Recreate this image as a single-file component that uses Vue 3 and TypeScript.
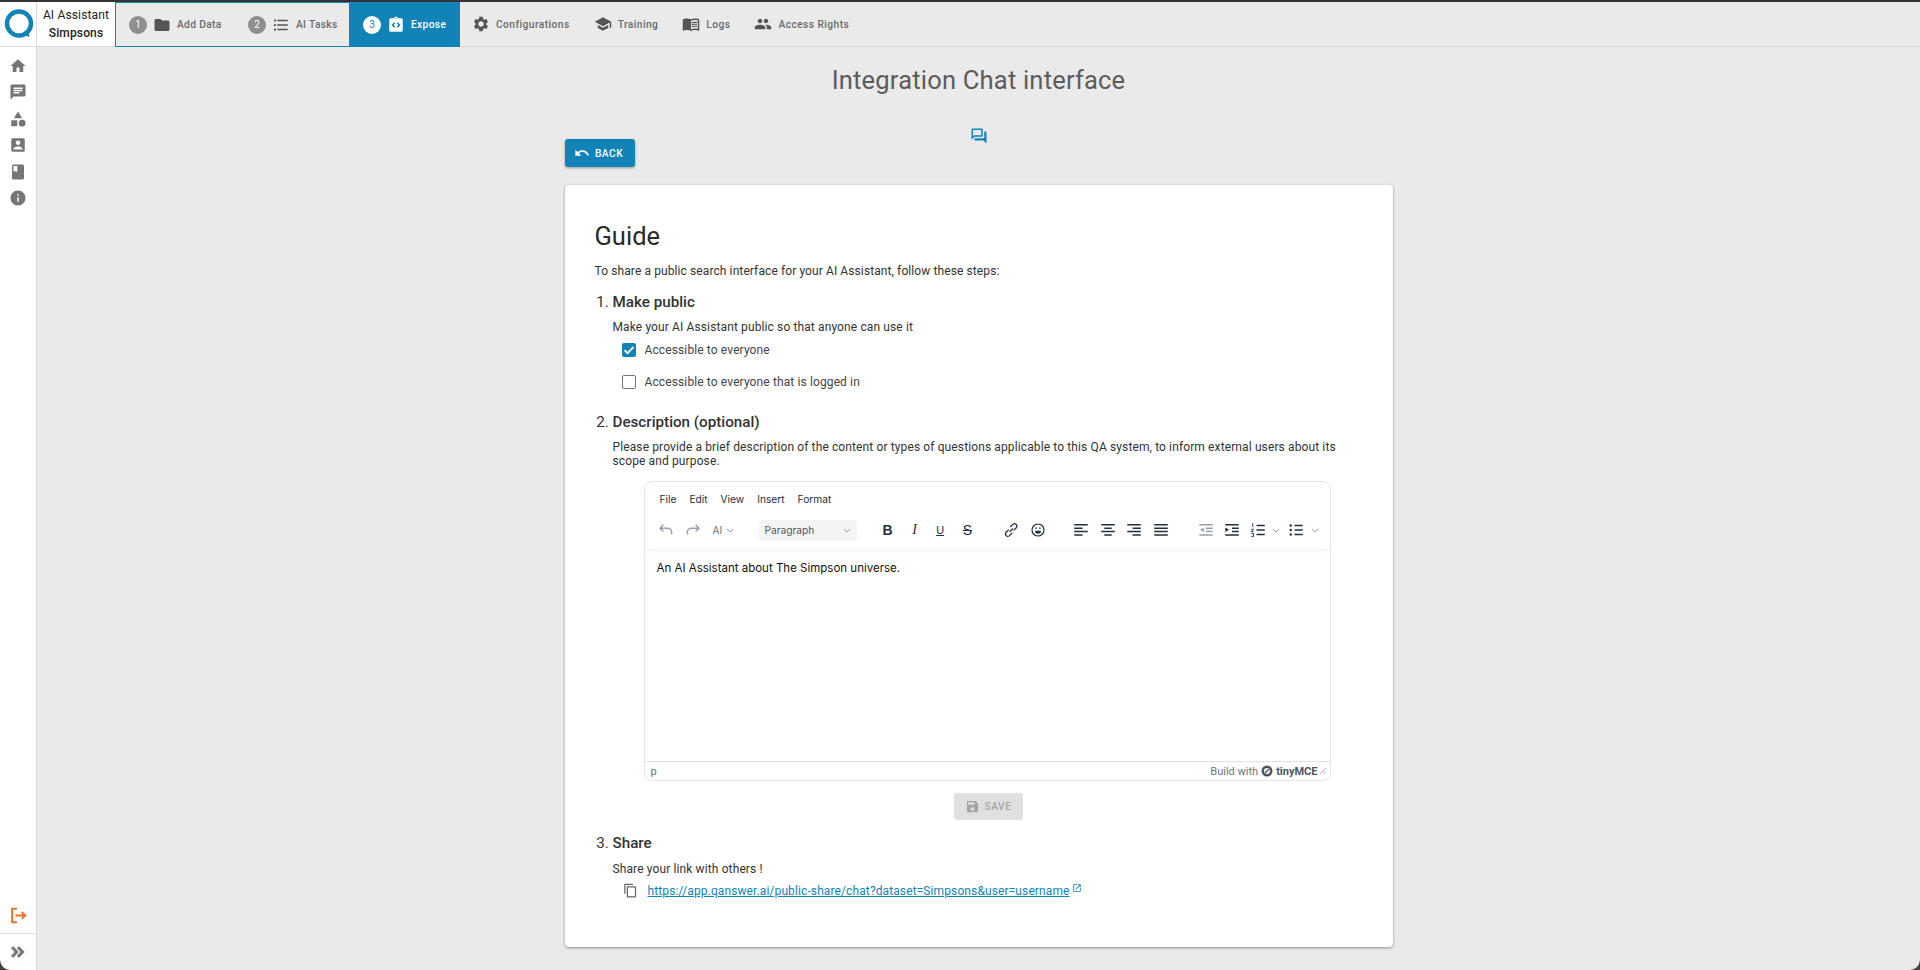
<template>
  <div class="window">
    <aside class="sidebar">
      <div class="logo-box">
        <svg class="logo" viewBox="0 0 30 30" width="30" height="30">
          <circle cx="15" cy="14.5" r="12" fill="none" stroke="#1283b7" stroke-width="4.5" />
          <path d="M17 25l8.5 3-1.5-8z" fill="#1283b7" />
        </svg>
      </div>
      <nav class="side-nav">
        <svg v-for="icon in sideIcons" :key="icon" class="side-icon" viewBox="0 0 24 24"><path :d="icon" /></svg>
      </nav>
      <div class="side-logout">
        <svg viewBox="0 0 24 24" width="19" height="19" fill="none" stroke="#e8742a" stroke-width="2.6">
          <path d="M10 3.5H4v17h6" />
          <path d="M8 12h12M16 8l4.5 4-4.5 4" />
        </svg>
      </div>
      <div class="side-expand">
        <svg viewBox="0 0 24 24" width="20" height="20" fill="#757575">
          <path d="M6.4 5 3.5 7.2 8 12l-4.500 4.800L6.400 19l6.500-7zM13.400 5l-2.900 2.200L15 12l-4.500 4.800 2.900 2.200 6.500-7z" />
        </svg>
      </div>
    </aside>

    <div class="main">
      <header class="topbar">
        <div class="assistant">
          <span>AI Assistant</span>
          <strong>Simpsons</strong>
        </div>
        <div class="steps">
          <div v-for="step in steps" :key="step.label" class="step" :class="{ active: step.active }" :style="{ width: step.width + 'px' }">
            <span class="badge">{{ step.n }}</span>
            <svg class="tab-icon" viewBox="0 0 24 24"><path :d="step.icon" /></svg>
            <span class="tab-label">{{ step.label }}</span>
          </div>
        </div>
        <div v-for="tab in tabs" :key="tab.label" class="tab">
          <svg class="tab-icon" viewBox="0 0 24 24"><path :d="tab.icon" /></svg>
          <span class="tab-label">{{ tab.label }}</span>
        </div>
      </header>

      <main class="content">
        <h1 class="page-title">Integration Chat interface</h1>
        <svg class="chat-mark" viewBox="0 0 24 24"><path d="M15 4v7H5.170L4 12.170V4h11m1-2H3c-.55 0-1 .45-1 1v14l4-4h10c.55 0 1-.45 1-1V3c0-.55-.45-1-1-1zm5 4h-2v9H6v2c0 .55.45 1 1 1h11l4 4V7c0-.55-.45-1-1-1z" /></svg>

        <div class="column">
          <button class="back-btn">
            <svg viewBox="0 0 24 24" width="16" height="16" fill="#fff"><path d="M12.500 8c-2.650 0-5.050.99-6.900 2.600L2 7v9h9l-3.620-3.620c1.390-1.160 3.160-1.880 5.120-1.880 3.540 0 6.550 2.310 7.600 5.500l2.370-.78C21.080 11.030 17.150 8 12.500 8z" /></svg>
            Back
          </button>

          <section class="card">
            <h2 class="guide">Guide</h2>
            <p class="intro">To share a public search interface for your AI Assistant, follow these steps:</p>

            <ol class="guide-steps">
              <li>
                <h3>Make public</h3>
                <p class="step-text">Make your AI Assistant public so that anyone can use it</p>
                <label class="check first">
                  <span class="box checked">
                    <svg viewBox="0 0 14 14" width="14" height="14" fill="none" stroke="#fff" stroke-width="1.8"><path d="M2.500 7.200l3 3 6-6.200" /></svg>
                  </span>
                  Accessible to everyone
                </label>
                <label class="check">
                  <span class="box"></span>
                  Accessible to everyone that is logged in
                </label>
              </li>

              <li class="second">
                <h3>Description (optional)</h3>
                <p class="step-text">Please provide a brief description of the content or types of questions applicable to this QA system, to inform external users about its scope and purpose.</p>

                <div class="editor">
                  <div class="editor-head">
                    <div class="menubar">
                      <span v-for="item in menuItems" :key="item">{{ item }}</span>
                    </div>
                    <div class="toolbar">
                      <svg class="tool dim undo" viewBox="0 0 24 24"><path d="M8.500 5 4 9.500 8.500 14M4.500 9.500H14a5.500 5.500 0 0 1 5.500 5.500v3" /></svg>
                      <svg class="tool dim redo" viewBox="0 0 24 24"><path d="M15.500 5 20 9.500 15.500 14M19.500 9.500H10A5.500 5.500 0 0 0 4.500 15v3" /></svg>
                      <span class="ai-menu">AI<svg class="chev" viewBox="0 0 10 6"><path d="M1 1l4 4 4-4" /></svg></span>
                      <span class="format-select">Paragraph<svg class="chev" viewBox="0 0 10 6"><path d="M1 1l4 4 4-4" /></svg></span>
                      <span class="tb-b">B</span>
                      <span class="tb-i">I</span>
                      <span class="tb-u">U</span>
                      <span class="tb-s">S</span>
                      <svg class="tool link" viewBox="0 0 24 24"><path d="M10 14.500l4.500-4.500M9 11.500 5.500 15a3.500 3.500 0 0 0 0 4.500 3.500 3.500 0 0 0 4.500 0L13.500 16M11 8l3.500-3.500a3.500 3.500 0 0 1 4.500 0 3.500 3.500 0 0 1 0 4.500L15.500 12.500" /></svg>
                      <svg class="tool smile" viewBox="0 0 24 24"><circle cx="12" cy="12" r="8" /><path d="M8 13h8a4 4 0 0 1-8 0z" fill="#222f3e" stroke="none" /><circle cx="9.500" cy="9.500" r="1.100" fill="#222f3e" stroke="none" /><circle cx="14.500" cy="9.500" r="1.100" fill="#222f3e" stroke="none" /></svg>
                      <svg v-for="(lines, i) in alignIcons" :key="i" class="tool align" :class="{ 'align-first': i === 0 }" viewBox="0 0 24 24"><path :d="lines" /></svg>
                      <svg class="tool outdent dim" viewBox="0 0 24 24"><path d="M3 5h18M12 9.500h9M12 14h9M3 18.500h18" /><path d="M9 8.500v6L4 11.500z" fill="#9aa1a9" stroke="none" /></svg>
                      <svg class="tool indent" viewBox="0 0 24 24"><path d="M3 5h18M12 9.500h9M12 14h9M3 18.500h18" /><path d="M3 8.500v6l5-3z" fill="#222f3e" stroke="none" /></svg>
                      <svg class="tool list" viewBox="0 0 24 24"><path d="M10 6h11M10 12h11M10 18h11" /><path class="thin" d="M5 3v5M3 11h3l-3 3h3M3 16.500h3v4H3" /></svg>
                      <svg class="chev list-chev" viewBox="0 0 10 6"><path d="M1 1l4 4 4-4" /></svg>
                      <svg class="tool bullets" viewBox="0 0 24 24"><path d="M10 6h11M10 12h11M10 18h11" /><circle cx="5" cy="6" r="1.600" fill="#222f3e" stroke="none" /><circle cx="5" cy="12" r="1.600" fill="#222f3e" stroke="none" /><circle cx="5" cy="18" r="1.600" fill="#222f3e" stroke="none" /></svg>
                      <svg class="chev list-chev-2" viewBox="0 0 10 6"><path d="M1 1l4 4 4-4" /></svg>
                    </div>
                  </div>
                  <div class="editor-body">An AI Assistant about The Simpson universe.</div>
                  <div class="statusbar">
                    <span class="path">p</span>
                    <span class="brand">
                      Build with
                      <svg viewBox="0 0 24 24" width="12" height="12"><circle cx="12" cy="12" r="8.500" fill="none" stroke="#4a5560" stroke-width="5" /><path d="M8 16 16 8" stroke="#4a5560" stroke-width="3" /></svg>
                      <b>tinyMCE</b>
                    </span>
                    <svg class="grip" viewBox="0 0 8 8" width="8" height="8" fill="none" stroke="#9aa0a6" stroke-width="0.8"><path d="M1 7l6-6M4.500 7L7 4.500" /></svg>
                  </div>
                </div>

                <div class="save-row">
                  <button class="save-btn">
                    <svg viewBox="0 0 24 24" width="15" height="15" fill="#a6a6a6"><path d="M17 3H5c-1.110 0-2 .9-2 2v14c0 1.100.89 2 2 2h14c1.100 0 2-.9 2-2V7l-4-4zm-5 16c-1.660 0-3-1.340-3-3s1.340-3 3-3 3 1.340 3 3-1.340 3-3 3zm3-10H5V5h10v4z" /></svg>
                    Save
                  </button>
                </div>
              </li>

              <li class="third">
                <h3>Share</h3>
                <p class="step-text">Share your link with others !</p>
                <div class="share-row">
                  <svg class="copy" viewBox="0 0 24 24"><path d="M16 1H4c-1.100 0-2 .9-2 2v14h2V3h12V1zm3 4H8c-1.100 0-2 .9-2 2v14c0 1.100.9 2 2 2h11c1.100 0 2-.9 2-2V7c0-1.100-.9-2-2-2zm0 16H8V7h11v14z" /></svg>
                  <a class="share-link">https://app.qanswer.ai/public-share/chat?dataset=Simpsons&amp;user=username</a>
                  <svg class="ext" viewBox="0 0 24 24"><path d="M19 19H5V5h7V3H5a2 2 0 0 0-2 2v14a2 2 0 0 0 2 2h14c1.100 0 2-.9 2-2v-7h-2v7zM14 3v2h3.590l-9.830 9.830 1.410 1.410L19 6.410V10h2V3h-7z" /></svg>
                </div>
              </li>
            </ol>
          </section>
        </div>
      </main>
    </div>

    <svg class="corner corner-left" viewBox="0 0 10 10" width="10" height="10"><path d="M0 0Q1 9 10 10H0z" fill="#4a4038" /></svg>
    <svg class="corner corner-right" viewBox="0 0 10 10" width="10" height="10"><path d="M10 0Q9 9 0 10H10z" fill="#4a4038" /></svg>
  </div>
</template>

<script setup lang="ts">
const sideIcons: string[] = [
  'M10 20v-6h4v6h5v-8h3L12 3 2 12h3v8z',
  'M20 2H4c-1.100 0-1.990.9-1.990 2L2 22l4-4h14c1.100 0 2-.9 2-2V4c0-1.100-.9-2-2-2zM6 9h12v2H6V9zm8 5H6v-2h8v2zm4-6H6V6h12v2z',
  'M12 2l-5.500 9h11zM17.500 13a4.500 4.500 0 1 0 0 9 4.500 4.500 0 0 0 0-9zM3 13.500h8v8H3z',
  'M3 5v14c0 1.100.89 2 2 2h14c1.100 0 2-.9 2-2V5c0-1.100-.9-2-2-2H5c-1.110 0-2 .9-2 2zm12 4c0 1.660-1.340 3-3 3s-3-1.340-3-3 1.340-3 3-3 3 1.340 3 3zm-9 8c0-2 4-3.100 6-3.100s6 1.100 6 3.100v1H6v-1z',
  'M18 2H6c-1.100 0-2 .9-2 2v16c0 1.100.9 2 2 2h12c1.100 0 2-.9 2-2V4c0-1.100-.9-2-2-2zM6 4h5v8l-2.500-1.500L6 12V4z',
  'M12 2C6.480 2 2 6.480 2 12s4.480 10 10 10 10-4.480 10-10S17.520 2 12 2zm1 15h-2v-6h2v6zm0-8h-2V7h2v2z',
]

const steps = [
  {
    n: 1,
    label: 'Add Data',
    width: 118,
    icon: 'M10 4H4c-1.100 0-1.990.9-1.990 2L2 18c0 1.100.9 2 2 2h16c1.100 0 2-.9 2-2V8c0-1.100-.9-2-2-2h-8l-2-2z',
  },
  {
    n: 2,
    label: 'AI Tasks',
    width: 115,
    icon: 'M4 10.500c-.83 0-1.500.67-1.500 1.500s.67 1.500 1.500 1.500 1.500-.67 1.500-1.500-.67-1.500-1.500-1.500zm0-6c-.83 0-1.500.67-1.500 1.500S3.170 7.500 4 7.500 5.500 6.830 5.500 6 4.830 4.500 4 4.500zm0 12c-.83 0-1.500.68-1.500 1.500s.68 1.500 1.500 1.500 1.500-.68 1.500-1.500-.67-1.500-1.500-1.500zM7 19h14v-2H7v2zm0-6h14v-2H7v2zm0-8v2h14V5H7z',
  },
  {
    n: 3,
    label: 'Expose',
    width: 111,
    active: true,
    icon: 'M19 3h-4.180C14.400 1.840 13.300 1 12 1c-1.300 0-2.400.84-2.820 2H5c-1.100 0-2 .9-2 2v14c0 1.100.9 2 2 2h14c1.100 0 2-.9 2-2V5c0-1.100-.9-2-2-2zm-8 11.170-1.410 1.420L6 12l3.590-3.590L11 9.830 8.830 12 11 14.170zm1-9.920c-.41 0-.75-.34-.75-.75s.34-.75.75-.75.75.34.75.75-.34.75-.75.75zm2.410 11.340L13 14.170 15.170 12 13 9.830l1.410-1.420L18 12l-3.590 3.590z',
  },
]

const tabs = [
  {
    label: 'Configurations',
    icon: 'M19.140 12.940c.04-.3.06-.61.06-.94 0-.32-.02-.64-.07-.94l2.030-1.580c.18-.14.23-.41.12-.61l-1.920-3.320c-.12-.22-.37-.29-.59-.22l-2.390.96c-.5-.38-1.030-.7-1.620-.94l-.36-2.540c-.04-.24-.24-.41-.48-.41h-3.840c-.24 0-.43.17-.47.41l-.36 2.540c-.59.24-1.130.57-1.620.94l-2.390-.96c-.22-.08-.47 0-.59.22L2.740 8.870c-.12.21-.08.47.12.61l2.030 1.580c-.05.3-.09.63-.09.94s.02.64.07.94l-2.030 1.580c-.18.14-.23.41-.12.61l1.920 3.320c.12.22.37.29.59.22l2.390-.96c.5.38 1.030.7 1.620.94l.36 2.540c.05.24.24.41.48.41h3.840c.24 0 .44-.17.47-.41l.36-2.540c.59-.24 1.130-.56 1.620-.94l2.390.96c.22.08.47 0 .59-.22l1.920-3.320c.12-.22.07-.47-.12-.61l-2.010-1.580zM12 15.600c-1.980 0-3.600-1.620-3.600-3.600s1.620-3.600 3.600-3.600 3.600 1.620 3.600 3.600-1.620 3.600-3.600 3.600z',
  },
  {
    label: 'Training',
    icon: 'M5 13.180v4L12 21l7-3.820v-4L12 17l-7-3.820zM12 3L1 9l11 6 9-4.910V17h2V9L12 3z',
  },
  {
    label: 'Logs',
    icon: 'M21 5c-1.110-.35-2.330-.5-3.500-.5-1.950 0-4.050.4-5.500 1.500-1.450-1.100-3.550-1.500-5.500-1.500S2.450 4.900 1 6v14.650c0 .25.25.5.5.5.1 0 .15-.05.25-.05C3.100 20.450 5.050 20 6.500 20c1.950 0 4.050.4 5.500 1.500 1.350-.85 3.800-1.500 5.500-1.500 1.650 0 3.350.3 4.750 1.050.1.05.15.05.25.05.25 0 .5-.25.5-.5V6c-.6-.45-1.250-.75-2-1zm0 13.500c-1.100-.35-2.300-.5-3.500-.5-1.700 0-4.150.65-5.500 1.500V8c1.350-.85 3.800-1.500 5.500-1.500 1.200 0 2.400.15 3.500.5v11.500zM17.500 10.500c.88 0 1.730.09 2.500.26V9.240c-.79-.15-1.640-.24-2.500-.24-1.700 0-3.240.29-4.500.83v1.660c1.130-.64 2.700-.99 4.500-.99zM13 12.490v1.660c1.130-.64 2.700-.99 4.500-.99.88 0 1.730.09 2.500.26V11.900c-.79-.15-1.640-.24-2.500-.24-1.700 0-3.240.3-4.500.83zM17.500 14.330c-1.700 0-3.240.29-4.500.83v1.660c1.130-.64 2.700-.99 4.500-.99.88 0 1.730.09 2.500.26v-1.520c-.79-.16-1.640-.24-2.500-.24z',
  },
  {
    label: 'Access Rights',
    icon: 'M16 11c1.660 0 2.990-1.340 2.990-3S17.660 5 16 5c-1.660 0-3 1.340-3 3s1.340 3 3 3zm-8 0c1.660 0 2.990-1.340 2.990-3S9.660 5 8 5C6.340 5 5 6.340 5 8s1.340 3 3 3zm0 2c-2.330 0-7 1.170-7 3.500V19h14v-2.500c0-2.330-4.670-3.500-7-3.500zm8 0c-.29 0-.62.02-.97.05 1.160.84 1.970 1.970 1.970 3.450V19h6v-2.500c0-2.330-4.670-3.500-7-3.500z',
  },
]

const menuItems = ['File', 'Edit', 'View', 'Insert', 'Format']

const alignIcons = [
  'M3 5h18M3 9.500h11M3 14h18M3 18.500h11',
  'M3 5h18M7 9.500h10M3 14h18M7 18.500h10',
  'M3 5h18M10 9.500h11M3 14h18M10 18.500h11',
  'M3 5h18M3 9.500h18M3 14h18M3 18.500h18',
]
</script>

<style>
html,
body {
  margin: 0;
  background: #eaeaea;
}
</style>

<style scoped>
.window {
  position: relative;
  display: flex;
  height: 970px;
  overflow: hidden;
  border-top: 2px solid #333;
  box-sizing: border-box;
  font-family: Roboto, "Liberation Sans", sans-serif;
  color: #333;
  background: #eaeaea;
}

.sidebar {
  width: 37px;
  flex: none;
  display: flex;
  flex-direction: column;
  background: #fff;
  border-right: 1px solid #dcdcdc;
  box-sizing: border-box;
}

.corner {
  position: absolute;
  bottom: 0;
}

.corner-left {
  left: 0;
}

.corner-right {
  right: 0;
}

.logo-box {
  height: 44px;
  display: flex;
  align-items: center;
  justify-content: center;
  border-bottom: 1px solid #e2e2e2;
}

.logo {
  margin-left: 1px;
}

.side-nav {
  display: flex;
  flex-direction: column;
  align-items: center;
  gap: 8.4px;
  padding-top: 10px;
  flex: 1;
}

.side-icon {
  width: 18px;
  height: 18px;
  fill: #757575;
}

.side-logout {
  height: 35px;
  display: flex;
  align-items: center;
  justify-content: center;
}

.side-expand {
  height: 36px;
  border-top: 1px solid #dcdcdc;
  display: flex;
  align-items: center;
  justify-content: center;
}

.main {
  flex: 1;
  min-width: 0;
  display: flex;
  flex-direction: column;
}

.topbar {
  height: 45px;
  flex: none;
  display: flex;
  align-items: stretch;
  border-bottom: 1px solid #d8d8d8;
  box-sizing: border-box;
}

.assistant {
  width: 78px;
  flex: none;
  background: #fff;
  display: flex;
  flex-direction: column;
  align-items: center;
  justify-content: center;
  gap: 2px;
  font-size: 12px;
  line-height: 16px;
  letter-spacing: 0.15px;
  color: #222;
}

.assistant strong {
  font-weight: 500;
}

.steps {
  display: flex;
  border: 1px solid #1283b7;
  border-right: none;
  margin-bottom: -1px;
}

.step {
  display: flex;
  align-items: center;
  padding-left: 14px;
  box-sizing: border-box;
}

.step:first-child {
  padding-left: 13px;
}

.step.active {
  background: #1283b7;
  color: #fff;
}

.badge {
  width: 18px;
  height: 18px;
  border-radius: 50%;
  background: #8f8f8f;
  color: #fff;
  font-size: 10px;
  display: flex;
  align-items: center;
  justify-content: center;
  flex: none;
}

.step.active .badge {
  background: #fff;
  color: #1283b7;
}

.tab {
  display: flex;
  align-items: center;
  padding: 0 12px;
}

.tab-icon {
  width: 18px;
  height: 18px;
  fill: #555;
  flex: none;
}

.step .tab-icon {
  margin: 0 6px;
}

.tab .tab-icon {
  margin-right: 6px;
}

.step.active .tab-icon {
  fill: #fff;
}

.tab-label {
  font-size: 10.2px;
  font-weight: 500;
  letter-spacing: 0.35px;
  color: #6a6a6a;
  white-space: nowrap;
}

.tab .tab-label {
  letter-spacing: 0.45px;
}

.step.active .tab-label {
  color: #fff;
}

.content {
  flex: 1;
  min-height: 0;
  display: flex;
  flex-direction: column;
  align-items: center;
}

.page-title {
  margin: 17px 0 0;
  font-size: 25.5px;
  line-height: 32px;
  font-weight: 400;
  letter-spacing: 0.2px;
  color: #5c5c5c;
}

.chat-mark {
  width: 18px;
  height: 18px;
  fill: #1283b7;
  margin-top: 31px;
  flex: none;
}

.column {
  width: 828px;
  flex: none;
}

.back-btn {
  height: 28px;
  width: 70px;
  margin-top: -6px;
  display: flex;
  align-items: center;
  justify-content: center;
  gap: 5px;
  border: none;
  border-radius: 3px;
  background: #1283b7;
  color: #fff;
  font-family: inherit;
  font-size: 10.2px;
  font-weight: 500;
  letter-spacing: 0.5px;
  text-transform: uppercase;
  padding: 0 2px 0 0;
  box-shadow: 0 1px 3px rgba(0, 0, 0, 0.35);
}

.card {
  margin-top: 18px;
  height: 762px;
  box-sizing: border-box;
  background: #fff;
  border-radius: 4px;
  box-shadow: 0 1px 3px rgba(0, 0, 0, 0.4);
  padding: 35px 30px 0;
}

.guide {
  margin: 0;
  font-size: 25.5px;
  line-height: 32px;
  font-weight: 400;
  color: #2a2a2a;
}

.intro {
  margin: 10px 0 0;
  font-size: 12px;
  line-height: 18px;
  letter-spacing: 0.1px;
}

.guide-steps {
  margin: 12px 0 0;
  padding: 0 0 0 18px;
  font-size: 15.2px;
}

.guide-steps h3 {
  margin: 0;
  font-size: 15.2px;
  line-height: 20px;
  font-weight: 500;
}

.step-text {
  margin: 8px 0 0;
  font-size: 12px;
  line-height: 14px;
  letter-spacing: 0.12px;
}

.check {
  display: flex;
  align-items: center;
  gap: 9px;
  margin: 11px 0 0 9px;
  font-size: 12px;
  line-height: 20px;
  letter-spacing: 0.12px;
  color: #444;
}

.check.first {
  margin-top: 6px;
}

.check + .check {
  margin-top: 12px;
}

.box {
  width: 14px;
  height: 14px;
  box-sizing: border-box;
  border: 1.5px solid #757575;
  border-radius: 2px;
  display: flex;
  align-items: center;
  justify-content: center;
}

.box.checked {
  border: none;
  background: #1283b7;
}

.second {
  margin-top: 20px;
}

.editor {
  margin: 13px 0 0 31px;
  width: 687px;
  height: 300px;
  box-sizing: border-box;
  border: 1px solid #e6e6e6;
  border-radius: 8px;
  display: flex;
  flex-direction: column;
  overflow: hidden;
  font-family: Inter, "Liberation Sans", sans-serif;
}

.editor-head {
  height: 67px;
  flex: none;
  box-shadow: 0 2px 4px rgba(0, 0, 0, 0.06);
}

.menubar {
  display: flex;
  gap: 13px;
  padding: 10px 0 0 15px;
  font-size: 10.2px;
  line-height: 14px;
  color: #222f3e;
}

.toolbar {
  display: flex;
  align-items: center;
  height: 22px;
  margin-top: 13px;
  padding-left: 12px;
  color: #222f3e;
}

.tool {
  width: 18px;
  height: 18px;
  flex: none;
  fill: none;
  stroke: #222f3e;
  stroke-width: 2;
}

.tool.dim {
  stroke: #9aa1a9;
}

.tool.redo {
  margin-left: 9px;
}

.chev {
  width: 8px;
  height: 5px;
  fill: none;
  stroke: #8a929b;
  stroke-width: 1.2;
  flex: none;
}

.ai-menu {
  display: flex;
  align-items: center;
  gap: 4px;
  width: 30px;
  margin-left: 11px;
  font-size: 10.2px;
  color: #69727d;
}

.format-select {
  display: flex;
  align-items: center;
  justify-content: space-between;
  box-sizing: border-box;
  width: 98px;
  height: 21px;
  margin-left: 16px;
  padding: 0 6px 0 6px;
  background: #f4f4f4;
  border-radius: 3px;
  font-size: 10.2px;
  color: #4e5864;
}

.tb-b,
.tb-i,
.tb-u,
.tb-s {
  width: 12px;
  text-align: center;
  font-family: "Liberation Sans", sans-serif;
  font-size: 13px;
  flex: none;
}

.tb-b {
  margin-left: 25px;
  font-weight: 700;
  font-size: 14px;
}

.tb-i {
  margin-left: 15px;
  font-family: "Liberation Serif", serif;
  font-style: italic;
  font-size: 14px;
}

.tb-u {
  margin-left: 13.7px;
  font-size: 11px;
  text-decoration: underline;
}

.tb-s {
  margin-left: 15.3px;
  font-size: 14px;
  text-decoration: line-through;
}

.tool.link {
  margin-left: 29px;
  stroke-width: 1.7;
}

.tool.smile {
  margin-left: 8.3px;
  stroke-width: 1.6;
}

.tool.align {
  margin-left: 8.4px;
  stroke-width: 2;
}

.tool.align-first {
  margin-left: 25.7px;
}

.tool.outdent {
  margin-left: 27.7px;
}

.tool.indent {
  margin-left: 7.3px;
}

.tool.list {
  margin-left: 8px;
}

.tool.list .thin {
  stroke-width: 1.2;
}

.list-chev {
  margin-left: 5.7px;
}

.tool.bullets {
  margin-left: 6.3px;
}

.list-chev-2 {
  margin-left: 6px;
}

.editor-body {
  flex: 1;
  padding: 11px 12px 0;
  font-size: 11.5px;
  line-height: 16px;
  color: #111;
}

.statusbar {
  height: 19px;
  flex: none;
  border-top: 1px solid #e2e2e2;
  box-sizing: border-box;
  display: flex;
  align-items: center;
  justify-content: space-between;
  padding: 0 3px 0 6px;
  font-family: Roboto, "Liberation Sans", sans-serif;
  font-size: 11px;
  color: #6c757d;
}

.brand {
  display: flex;
  align-items: center;
  gap: 3px;
  margin-left: auto;
  margin-right: 1px;
}

.brand b {
  font-weight: 700;
  color: #4a5560;
}

.save-row {
  display: flex;
  justify-content: center;
  margin: 12px 0 0 32px;
  width: 687px;
}

.save-btn {
  width: 69px;
  height: 27px;
  display: flex;
  align-items: center;
  justify-content: center;
  gap: 5px;
  padding: 0;
  border: none;
  border-radius: 3px;
  background: #e0e0e0;
  color: #a6a6a6;
  font-family: inherit;
  font-size: 10.2px;
  font-weight: 500;
  letter-spacing: 0.5px;
  text-transform: uppercase;
}

.third {
  margin-top: 13px;
}

.third .step-text {
  margin-top: 9px;
}

.share-row {
  display: flex;
  align-items: center;
  margin: 7px 0 0 10px;
  font-size: 12px;
  letter-spacing: 0.11px;
}

.copy {
  width: 15px;
  height: 15px;
  fill: #666;
  flex: none;
  margin-right: 10px;
}

.share-link {
  color: #1283b7;
  text-decoration: underline;
}

.ext {
  width: 10px;
  height: 10px;
  fill: #1283b7;
  margin: -6px 0 0 2px;
  flex: none;
}
</style>
